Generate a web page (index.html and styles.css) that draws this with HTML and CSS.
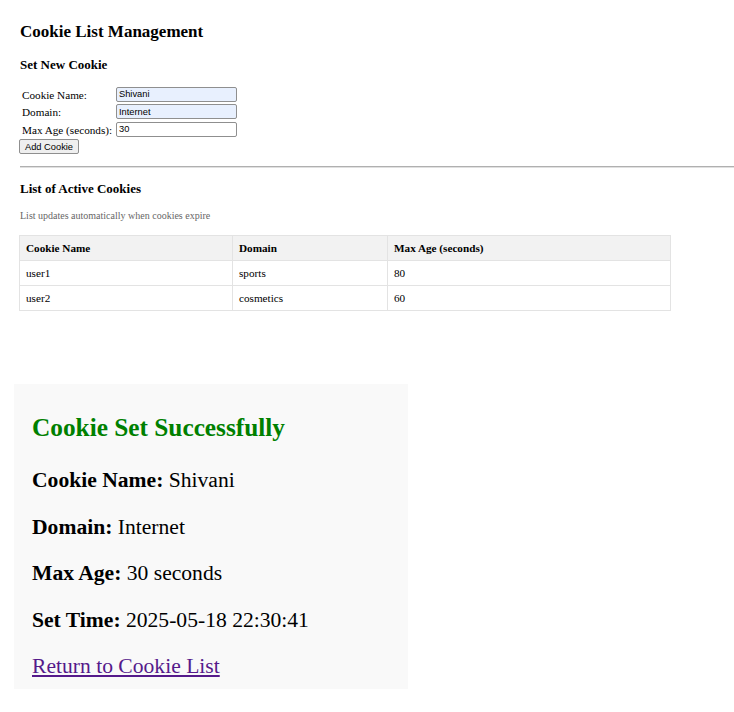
FILE: index.html
```html
<!DOCTYPE html>
<html>
<head>
<meta charset="utf-8">
<title>Cookie List Management</title>
<link rel="stylesheet" href="styles.css">
</head>
<body>
<section class="manager">
  <h1 class="title">Cookie List Management</h1>
  <h3 class="subtitle">Set New Cookie</h3>
  <form class="cookie-form">
    <div class="form-grid">
      <label class="form-label">Cookie Name:</label>
      <input class="form-input autofill" type="text" value="Shivani">
      <label class="form-label">Domain:</label>
      <input class="form-input autofill" type="text" value="Internet">
      <label class="form-label">Max Age (seconds):</label>
      <input class="form-input" type="text" value="30">
    </div>
    <button class="add-btn" type="button">Add Cookie</button>
  </form>
  <hr class="divider">
  <h3 class="subtitle list-title">List of Active Cookies</h3>
  <p class="note">List updates automatically when cookies expire</p>
  <table class="cookie-table">
    <colgroup>
      <col class="col-name">
      <col class="col-domain">
      <col class="col-age">
    </colgroup>
    <thead>
      <tr><th>Cookie Name</th><th>Domain</th><th>Max Age (seconds)</th></tr>
    </thead>
    <tbody>
      <tr><td>user1</td><td>sports</td><td>80</td></tr>
      <tr><td>user2</td><td>cosmetics</td><td>60</td></tr>
    </tbody>
  </table>
</section>
<section class="result">
  <h3 class="result-title">Cookie Set Successfully</h3>
  <p class="result-line"><strong>Cookie Name:</strong> Shivani</p>
  <p class="result-line"><strong>Domain:</strong> Internet</p>
  <p class="result-line"><strong>Max Age:</strong> 30 seconds</p>
  <p class="result-line"><strong>Set Time:</strong> 2025-05-18 22:30:41</p>
  <p class="result-line last"><a class="return-link" href="#">Return to Cookie List</a></p>
</section>
</body>
</html>
```
FILE: styles.css
```css
html, body {
  margin: 0;
  padding: 0;
  background: #ffffff;
}

body {
  font-family: "Liberation Serif", "Times New Roman", serif;
  color: #000;
}

.manager {
  padding: 22px 0 0 20px;
}

.title {
  font-size: 17px;
  font-weight: bold;
  margin: 0;
}

.subtitle {
  font-size: 13px;
  font-weight: bold;
  margin: 15px 0 0 0;
}

.cookie-form {
  margin: 13.5px 0 0 0;
}

.form-grid {
  display: grid;
  grid-template-columns: 96px 121px;
  row-gap: 2.5px;
  align-items: center;
}

.form-label {
  font-size: 11.2px;
  padding-left: 2px;
  line-height: 13px;
  padding-top: 2px;
}

.form-input {
  box-sizing: border-box;
  width: 121px;
  height: 15px;
  margin: 0;
  padding: 0 2px;
  border: 1px solid #8f8f8f;
  border-radius: 2px;
  font-family: "Liberation Sans", Arial, sans-serif;
  font-size: 9.3px;
  color: #000;
  background: #fff;
}

.form-input.autofill {
  background: #e8f0fe;
}

.add-btn {
  display: block;
  box-sizing: border-box;
  margin: 2.5px 0 0 -1px;
  width: 60px;
  height: 15px;
  padding: 0;
  border: 1px solid #8f8f8f;
  border-radius: 2px;
  background: #efefef;
  font-family: "Liberation Sans", Arial, sans-serif;
  font-size: 9.3px;
  color: #000;
}

.divider {
  margin: 11.5px 0 0 0;
  height: 0;
  border: 0;
  border-top: 1px solid #b0b0b0;
  border-bottom: 1px solid #e0e0e0;
}

.list-title {
  margin-top: 13.4px;
}

.note {
  font-size: 10px;
  color: #666;
  margin: 13.6px 0 0 0;
}

.cookie-table {
  margin: 13.5px 0 0 -1px;
  border-collapse: collapse;
  width: 651px;
  table-layout: fixed;
  font-size: 11.2px;
}

.col-name { width: 213px; }
.col-domain { width: 155px; }
.col-age { width: 283px; }

.cookie-table th,
.cookie-table td {
  border: 1px solid #e3e3e3;
  height: 24px;
  padding: 0 6px;
  text-align: left;
  vertical-align: middle;
}

.cookie-table th {
  background: #f2f2f2;
  font-weight: bold;
}

.result {
  margin: 73px 0 0 14px;
  width: 394px;
  box-sizing: border-box;
  background: #f9f9f9;
  padding: 4px 18px 9.5px 18px;
}

.result-title {
  font-size: 25.3px;
  font-weight: bold;
  color: #008000;
  margin: 25px 0 26px 0;
}

.result-line {
  font-size: 21.6px;
  margin: 21.6px 0;
}

.result-title + .result-line {
  margin-top: 0;
}

.result-line.last {
  margin-bottom: 0;
}

.return-link {
  color: #551a8b;
  text-decoration: underline;
}
```
